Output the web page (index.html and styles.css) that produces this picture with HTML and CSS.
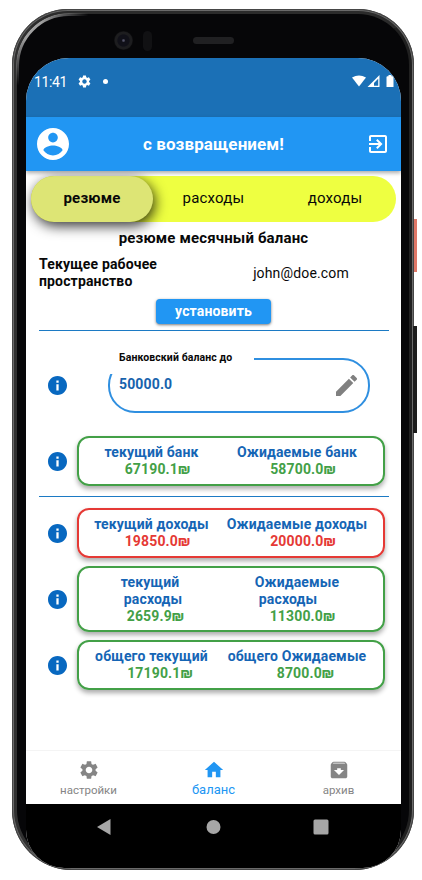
FILE: index.html
```html
<!DOCTYPE html>
<html lang="ru">
<head>
<meta charset="utf-8">
<title>Баланс</title>
<link rel="stylesheet" href="styles.css">
</head>
<body>
<svg class="defs" width="0" height="0" aria-hidden="true">
  <symbol id="gear" viewBox="0 0 24 24"><path d="M19.14 12.94c.04-.3.06-.61.06-.94 0-.32-.02-.64-.07-.94l2.03-1.58c.18-.14.23-.41.12-.61l-1.92-3.32c-.12-.22-.37-.29-.59-.22l-2.39.96c-.5-.38-1.03-.7-1.62-.94l-.36-2.54c-.04-.24-.24-.41-.48-.41h-3.84c-.24 0-.43.17-.47.41l-.36 2.54c-.59.24-1.13.57-1.62.94l-2.39-.96c-.22-.08-.47 0-.59.22L2.74 8.87c-.12.21-.08.47.12.61l2.03 1.58c-.05.3-.09.63-.09.94s.02.64.07.94l-2.03 1.58c-.18.14-.23.41-.12.61l1.92 3.32c.12.22.37.29.59.22l2.39-.96c.5.38 1.03.7 1.62.94l.36 2.54c.05.24.24.41.48.41h3.84c.24 0 .44-.17.47-.41l.36-2.54c.59-.24 1.13-.56 1.62-.94l2.39.96c.22.08.47 0 .59-.22l1.92-3.32c.12-.22.07-.47-.12-.61l-2.01-1.58zM12 15.6c-1.98 0-3.6-1.62-3.6-3.6s1.62-3.6 3.6-3.6 3.6 1.62 3.6 3.6-1.62 3.6-3.6 3.6z"/></symbol>
  <symbol id="info" viewBox="2 2 20 20"><path d="M12 2C6.48 2 2 6.48 2 12s4.48 10 10 10 10-4.48 10-10S17.52 2 12 2zm1.200 15.300h-2.400v-6.500h2.400v6.500zm0-8.200h-2.400V6.700h2.400v2.400z"/></symbol>
</svg>
<div class="device">
  <span class="key key-power"></span>
  <span class="key key-volume"></span>
  <div class="bezel">
    <div class="sensors"><span class="camera"></span><span class="sensor"></span><span class="speaker"></span></div>
    <div class="screen">
      <div class="status">
        <span class="clock">11:41</span>
        <svg class="status-gear"><use href="#gear"/></svg>
        <span class="dot"></span>
        <svg class="signals" viewBox="0 0 43 13"><path d="M0 2.6Q7 -1.8 14 2.6L7 11.5Z"/><path fill-rule="evenodd" d="M15.500 12 27.500 0V12ZM22 10.800h4.200V3.800L22 8Z"/><path d="M34.500 2.200q0-1 1-1h1V0h3v1.200h1q1 0 1 1V12h-7Z"/></svg>
      </div>
      <header class="appbar">
        <svg class="avatar" viewBox="2 2 20 20"><path d="M12 2C6.480 2 2 6.480 2 12s4.480 10 10 10 10-4.480 10-10S17.520 2 12 2zm0 3c1.660 0 3 1.340 3 3s-1.340 3-3 3-3-1.340-3-3 1.340-3 3-3zm0 14.200c-2.500 0-4.710-1.280-6-3.220.03-1.990 4-3.080 6-3.080 1.990 0 5.970 1.090 6 3.080-1.290 1.940-3.500 3.220-6 3.220z"/></svg>
        <h1>с возвращением!</h1>
        <svg class="logout" viewBox="3 3 18 18"><path d="M10.090 15.590 11.500 17l5-5-5-5-1.410 1.410L12.670 11H3v2h9.670l-2.580 2.590zM19 3H5c-1.110 0-2 .9-2 2v4h2V5h14v14H5v-4H3v4c0 1.100.89 2 2 2h14c1.100 0 2-.9 2-2V5c0-1.100-.9-2-2-2z"/></svg>
      </header>
      <main>
        <nav class="tabs"><span class="tab active">резюме</span><span class="tab">расходы</span><span class="tab">доходы</span></nav>
        <h2>резюме месячный баланс</h2>
        <div class="workspace"><b>Текущее рабочее пространство</b><span>john@doe.com</span></div>
        <button class="set">установить</button>
        <section class="bank">
          <div class="row field-row">
            <svg class="info"><use href="#info"/></svg>
            <div class="field">
              <span class="label">Банковский баланс до</span>
              <span class="amount">50000.0</span>
              <svg class="pencil" viewBox="3 3 18 18"><path d="M3 17.250V21h3.750L17.810 9.940l-3.750-3.750L3 17.250zM20.710 7.040c.39-.39.39-1.020 0-1.410l-2.340-2.340c-.39-.39-1.020-.39-1.410 0l-1.830 1.830 3.750 3.750 1.830-1.830z"/></svg>
            </div>
          </div>
          <div class="row">
            <svg class="info"><use href="#info"/></svg>
            <div class="card">
              <div><p>текущий банк</p><strong>67190.1₪</strong></div>
              <div><p>Ожидаемые банк</p><strong>58700.0₪</strong></div>
            </div>
          </div>
        </section>
        <section class="totals">
          <div class="row">
            <svg class="info"><use href="#info"/></svg>
            <div class="card negative">
              <div><p>текущий доходы</p><strong>19850.0₪</strong></div>
              <div><p>Ожидаемые доходы</p><strong>20000.0₪</strong></div>
            </div>
          </div>
          <div class="row">
            <svg class="info"><use href="#info"/></svg>
            <div class="card tall">
              <div><p>текущий<br><span class="nudge-right">расходы</span></p><strong>2659.9₪</strong></div>
              <div><p>Ожидаемые<br><span class="nudge-left">расходы</span></p><strong>11300.0₪</strong></div>
            </div>
          </div>
          <div class="row">
            <svg class="info"><use href="#info"/></svg>
            <div class="card sum">
              <div><p>общего текущий</p><strong>17190.1₪</strong></div>
              <div><p>общего Ожидаемые</p><strong>8700.0₪</strong></div>
            </div>
          </div>
        </section>
      </main>
      <nav class="bottom">
        <span><svg viewBox="0 0 24 24"><use href="#gear"/></svg>настройки</span>
        <span class="current"><svg viewBox="0 0 24 24"><path d="M10 20v-6h4v6h5v-8h3L12 3 2 12h3v8z"/></svg>баланс</span>
        <span><svg viewBox="0 0 24 24"><path d="M20.540 5.230l-1.390-1.680C18.880 3.210 18.470 3 18 3H6c-.47 0-.88.21-1.160.55L3.460 5.230C3.170 5.570 3 6.020 3 6.500V19c0 1.100.9 2 2 2h14c1.100 0 2-.9 2-2V6.500c0-.48-.17-.93-.46-1.270zM12 17.500 6.500 12H10v-2h4v2h3.500L12 17.500zM5.120 5l.81-1h12l.94 1H5.120z"/></svg>архив</span>
      </nav>
      <div class="system">
        <svg viewBox="0 0 16 16"><path d="M14.500 0v16L1 8Z"/></svg>
        <svg viewBox="0 0 16 16"><circle cx="8.500" cy="8" r="7"/></svg>
        <svg viewBox="0 0 16 16"><rect x=".5" y=".5" width="15" height="15" rx="1.500"/></svg>
      </div>
    </div>
  </div>
</div>
</body>
</html>
```
FILE: styles.css
```css
* { box-sizing: border-box; }
body { margin: 0; background: #fff; font-family: Roboto, sans-serif; color: #080808; overflow: hidden; }
h1, h2, p { margin: 0; }
svg { display: block; fill: currentColor; flex: none; }
.defs { position: absolute; }

.device {
  position: relative; width: 402px; height: 861px; margin: 9px 0 0 12px; padding: 2px;
  border-radius: 56px 56px 60px 60px; background: #2c2c2c;
  box-shadow: inset 0 0 0 1px #464646;
}
.bezel {
  position: relative; height: 857px; padding: 0 9px; border: 3px solid #090909; border-radius: 54px 54px 58px 58px;
  background: #060608; box-shadow: 0 0 0 1px #6a6a6a;
  border-color: #2b2b2b #202020 #3c3c3c #303030;
}
.bezel::before {
  content: ""; position: absolute; inset: -1px; border: 3px solid #a0a0a0; border-radius: 53px; pointer-events: none;
  -webkit-mask-image: radial-gradient(circle at 14px 14px, #000 12px, transparent 60px);
  mask-image: radial-gradient(circle at 14px 14px, #000 12px, transparent 60px);
}
.key { position: absolute; z-index: 1; }
.key-power { left: 402px; top: 210px; width: 3px; height: 53px; background: #df7868; }
.key-volume { left: 401px; top: 317px; width: 4px; height: 107px; background: #1c1c1c; }
.sensors { display: flex; align-items: center; height: 44px; padding: 9px 0 0 88px; }
.camera { width: 19px; height: 19px; border-radius: 50%; background: radial-gradient(#55556a 0 5%, #101018 14% 42%, #1d1d1f 50% 62%, #101012 70%); }
.sensor { width: 9px; height: 20px; margin-left: 10px; border-radius: 5px; background: #111113; }
.speaker { width: 41px; height: 7px; margin-left: 41px; border-radius: 4px; background: #202022; }
.screen { width: 375px; height: 810px; display: flex; flex-direction: column; border-radius: 43px 43px 38px 38px; overflow: hidden; background: #fff; }

.status { display: flex; align-items: center; height: 59px; padding: 0 6px 12px 8px; background: #1b70b6; color: #fff; flex: none; }
.clock { width: 43px; font-size: 14px; letter-spacing: -.35px; }
.status-gear { width: 15px; height: 15px; }
.dot { width: 5px; height: 5px; margin-left: 11px; border-radius: 50%; background: #fff; }
.signals { width: 43px; height: 13px; margin-left: auto; }

.appbar { position: relative; z-index: 1; display: flex; align-items: center; height: 54px; flex: none; padding: 0 14px 0 11px; background: #2196f3; color: #fff; box-shadow: 0 2px 4px #0005; }
.avatar { width: 32px; height: 32px; }
.appbar h1 { flex: 1; padding-right: 11px; font-size: 17px; line-height: 20px; letter-spacing: .1px; text-align: center; }
.logout { width: 18px; height: 18px; }

main { height: 579px; flex: none; padding: 5px 5px 0; }
.tabs { display: grid; grid-template-columns: 122px 121px 122px; height: 46px; border-radius: 23px; background: #eeff41; }
.tab { display: flex; align-items: center; justify-content: center; font-size: 15px; letter-spacing: .2px; border-radius: 23px; padding-bottom: 2px; }
.tab.active { font-weight: 700; background: #dde575; box-shadow: 2px 4px 13px #000c; }
h2 { margin-top: 7px; font-size: 15px; line-height: 18px; letter-spacing: .15px; text-align: center; }
.workspace { display: grid; grid-template-columns: 164px 1fr; align-items: center; height: 34px; margin: 9px 8px 0; font-size: 14px; line-height: 17px; letter-spacing: .15px; }
.workspace span { padding-left: 11px; text-align: center; }
.set { display: block; width: 115px; height: 25px; margin: 9px 0 0 125px; padding: 0; border: 0; border-radius: 4px; background: #2196f3; color: #fff; font: 700 14px/23px Roboto, sans-serif; letter-spacing: .15px; box-shadow: 0 1px 3px #0008; }

section { margin: 0 7px 0 8px; border-top: 1px solid #1c7ac4; }
.row { display: flex; align-items: center; }
.info { width: 19px; height: 19px; margin: 0 10px 0 9px; color: #0868c0; }
.bank { height: 166px; margin-top: 6px; padding-top: 27px; }
.bank .row + .row { margin-top: 23px; }
.field { position: relative; display: flex; align-items: center; justify-content: space-between; width: 262px; height: 55px; margin-left: 31px; padding: 0 13px 2px 11px; border: 2px solid #2f8fe0; border-radius: 27px; }
.label { position: absolute; left: -3px; top: -10px; width: 147px; height: 24px; padding-left: 12px; background: #fff; font-size: 10.500px; line-height: 16px; letter-spacing: .1px; font-weight: 700; white-space: nowrap; }
.amount { position: relative; margin: -2px 0 0 -2px; font-size: 14px; letter-spacing: .15px; font-weight: 700; color: #1763ad; }
.pencil { width: 21px; height: 21px; color: #808080; margin-top: 2px; margin-right: -2px; }

.card { display: grid; grid-template-columns: 145px 146px; align-items: center; width: 308px; height: 50px; border: 2px solid #43a047; border-radius: 12px; box-shadow: 0 3px 5px #0005; font-size: 14px; line-height: 17px; letter-spacing: .15px; text-align: center; color: #43a047; }
.card p { color: #1565b5; font-weight: 700; white-space: nowrap; }
.card strong { display: block; padding-left: 12px; }
.negative { border-color: #e53935; color: #e53935; }
.totals { padding-top: 11px; }
.totals .row + .row { margin-top: 8px; }
.tall { height: 66px; }
.tall > div:first-child { padding-right: 3px; }
.tall strong { padding-left: 11px; }
.nudge-right { padding-left: 6px; }
.nudge-left { padding-right: 18px; }
.sum strong { padding-left: 17px; }

.bottom { display: grid; grid-template-columns: repeat(3, 125px); height: 54px; flex: none; border-top: 1px solid #f4f4f4; color: #858585; font-size: 11.500px; }
.bottom span { display: flex; flex-direction: column; align-items: center; padding-top: 8px; line-height: 16px; }
.bottom svg { width: 22px; height: 22px; margin-bottom: 1px; }
.bottom .current { color: #2196f3; font-size: 13px; }
.system { display: flex; justify-content: space-between; flex: 1; padding: 15px 72px 0 70px; background: #000; color: #a6a6a6; }
.system svg { width: 16px; height: 16px; }
```
